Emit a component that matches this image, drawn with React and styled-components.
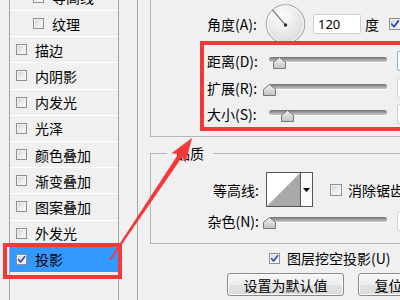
import React from 'react';
import styled, { createGlobalStyle } from 'styled-components';

const Global = createGlobalStyle`
  html, body { margin: 0; padding: 0; background: #f0f0f0; }
  body { font-family: "Noto Sans CJK SC", "Noto Sans", sans-serif; }
`;

const Screen = styled.div`
  position: relative;
  width: 400px;
  height: 300px;
  overflow: hidden;
  display: flex;
  background: #f0f0f0;
  font-family: "Noto Sans CJK SC", "Noto Sans", sans-serif;
  font-size: 14px;
  color: #000;
`;

const Sidebar = styled.div`
  flex: none;
  width: 137px;
  padding-left: 9px;
  box-sizing: border-box;
`;

const StyleList = styled.ul`
  list-style: none;
  margin: -16.2px 0 0;
  padding: 0;
  width: 110px;
  height: 340px;
  box-sizing: border-box;
  border-left: 1px solid #a5a5a5;
  border-right: 1px solid #a5a5a5;
`;

const StyleRow = styled.li`
  height: 26.2px;
  box-sizing: border-box;
  border-top: 1px solid #ffffff;
  display: flex;
  align-items: center;
  gap: 8px;
  padding-left: ${p => (p.$indent ? 23 : 6)}px;
  background: ${p => (p.$selected ? '#3399ff' : 'transparent')};
  line-height: 20px;
  white-space: nowrap;
`;

const Box = styled.span`
  flex: none;
  width: ${p => p.$size}px;
  height: ${p => p.$size}px;
  box-sizing: border-box;
  border: 1px solid #8e8f8f;
  background: linear-gradient(135deg, #d0d0d0 0%, #ececec 55%, #fbfbfb 100%);
  box-shadow: inset 0 0 0 1px #f3f3f3;
  display: inline-flex;
  align-items: center;
  justify-content: center;
`;

const Check = ({ checked, size = 11 }) => (
  <Box $size={size}>
    {checked && (
      <svg width={size - 2} height={size - 2} viewBox="0 0 9 9">
        <path d="M1.6 4.7 L3.6 7 L7.6 1.7" fill="none" stroke="#2b48b5" strokeWidth="1.6" strokeLinecap="round" strokeLinejoin="round" />
      </svg>
    )}
  </Box>
);

const Panel = styled.div`
  flex: none;
  width: 330px;
  border-left: 1px solid #a9a9a9;
  padding-left: 12px;
  box-sizing: border-box;
  display: flex;
  flex-direction: column;
`;

const Group = styled.fieldset`
  margin: ${p => (p.$cut ? '0' : '6px 0 0')};
  padding: 0;
  width: 310px;
  min-width: 0;
  box-sizing: border-box;
  border: 1px solid #b4b4b4;
  border-top: ${p => (p.$cut ? 'none' : '1px solid #b4b4b4')};
`;

const Legend = styled.legend`
  margin-left: 16px;
  padding: 0 9px;
  line-height: 20px;
  font-size: 14px;
`;

const GroupBody = styled.div`
  padding: ${p => p.$pad};
  padding-left: 49px;
  display: flex;
  flex-direction: column;
`;

const FieldRow = styled.div`
  display: flex;
  align-items: center;
  height: ${p => p.$h}px;
`;

const Label = styled.label`
  flex: none;
  width: 63px;
  box-sizing: border-box;
  text-align: ${p => (p.$right ? 'right' : 'left')};
  padding: ${p => (p.$right ? '0 4px 0 0' : '0 0 0 7px')};
  line-height: 20px;
  white-space: nowrap;
`;

const DialWrap = styled.div`
  flex: none;
  margin-left: 2px;
  width: 41px;
  height: 40px;
`;

const NumBox = styled.div`
  flex: none;
  width: 48px;
  height: 20px;
  margin-left: ${p => p.$ml}px;
  box-sizing: border-box;
  background: #fff;
  border: 1px solid ${p => (p.$focus ? '#7fb2e6' : '#cfcfcf')};
  border-radius: 2px;
  padding-left: 4px;
  font-size: 13px;
  line-height: 18px;
  font-family: "Noto Sans", "Noto Sans CJK SC", sans-serif;
`;

const Unit = styled.span`
  margin: 0 10px 0 4px;
  line-height: 20px;
`;

const Slider = styled.div`
  position: relative;
  flex: none;
  width: 130px;
  height: 20px;
`;

const Track = styled.div`
  margin: 6px 6px 0;
  height: 5px;
  border-radius: 3px;
  background: linear-gradient(#6f6f6f, #a9a9a9 60%, #c9c9c9);
  box-shadow: 0 1px 0 #ffffff;
`;

const ThumbSpot = styled.svg`
  position: absolute;
  top: 6px;
  left: ${p => p.$pos - 0.5}px;
`;

const Thumb = ({ pos }) => (
  <ThumbSpot $pos={pos} width="13" height="12" viewBox="0 0 13 12">
    <defs>
      <linearGradient id="tg" x1="0" y1="0" x2="0" y2="1">
        <stop offset="0" stopColor="#f2f2f2" />
        <stop offset="1" stopColor="#c2c2c2" />
      </linearGradient>
    </defs>
    <polygon points="6.5,0.5 12.5,5.2 12.5,11.5 0.5,11.5 0.5,5.2" fill="url(#tg)" stroke="#777" strokeWidth="1" />
  </ThumbSpot>
);

const SliderControl = ({ pos }) => (
  <Slider>
    <Track />
    <Thumb pos={pos} />
  </Slider>
);

const Picker = styled.div`
  flex: none;
  display: flex;
  width: 47px;
  height: 35px;
  margin-left: 3px;
  box-sizing: border-box;
  border: 1px solid #555;
  background: #fff;
`;

const PickerArrow = styled.div`
  flex: 1;
  border-left: 1px solid #555;
  display: flex;
  align-items: center;
  justify-content: center;
  background: #fafafa;
`;

const CheckLabel = styled.label`
  display: flex;
  align-items: center;
  gap: ${p => p.$gap}px;
  margin-left: ${p => p.$ml}px;
  line-height: 20px;
  white-space: nowrap;
`;

const OptionRow = styled.div`
  display: flex;
  align-items: center;
  height: 28px;
  padding-left: 119px;
`;

const ButtonRow = styled.div`
  display: flex;
  gap: 14px;
  margin-top: 1px;
  padding-left: 77px;
`;

const Button = styled.button`
  flex: none;
  width: ${p => p.$w}px;
  height: 23px;
  padding: 0;
  font: inherit;
  font-size: 14px;
  line-height: 20px;
  color: #000;
  border: 1px solid #8a8a8a;
  border-radius: 3px;
  background: linear-gradient(#f6f6f6 0%, #eeeeee 50%, #e2e2e2 52%, #dadada 100%);
  box-shadow: inset 0 0 0 1px #fbfbfb;
`;

const Mark = styled.div`
  position: absolute;
  left: ${p => p.$x}px;
  top: ${p => p.$y}px;
  width: ${p => p.$w}px;
  height: ${p => p.$h}px;
  box-sizing: border-box;
  border: 4px solid #f03a3a;
  pointer-events: none;
`;

const ArrowLayer = styled.svg`
  position: absolute;
  left: 0;
  top: 0;
  pointer-events: none;
`;

const styleItems = [
  { name: '等高线', indent: true },
  { name: '纹理', indent: true },
  { name: '描边' },
  { name: '内阴影' },
  { name: '内发光' },
  { name: '光泽' },
  { name: '颜色叠加' },
  { name: '渐变叠加' },
  { name: '图案叠加' },
  { name: '外发光' },
  { name: '投影', checked: true, selected: true },
];

const sliders = [
  { label: '距离(D):', pos: 10.5, focus: true },
  { label: '扩展(R):', pos: 0.5 },
  { label: '大小(S):', pos: 18 },
];

export default function App() {
  return (
    <>
      <Global />
      <Screen>
        <Sidebar>
          <StyleList>
            {styleItems.map(it => (
              <StyleRow key={it.name} $indent={it.indent} $selected={it.selected}>
                <Check checked={it.checked} />
                <span>{it.name}</span>
              </StyleRow>
            ))}
          </StyleList>
        </Sidebar>

        <Panel>
          <Group $cut>
            <GroupBody $pad="0 0 8.5px">
              <FieldRow $h={48}>
                <Label>角度(A):</Label>
                <DialWrap>
                  <svg width="41" height="40" viewBox="0 0 41 40">
                    <defs>
                      <radialGradient id="dg" cx="0.4" cy="0.3" r="0.8">
                        <stop offset="0" stopColor="#ffffff" />
                        <stop offset="1" stopColor="#d6d6d6" />
                      </radialGradient>
                    </defs>
                    <circle cx="20.5" cy="20" r="19.3" fill="url(#dg)" stroke="#9c9c9c" />
                    <circle cx="20.5" cy="20" r="18.2" fill="none" stroke="#ffffff" strokeOpacity="0.7" />
                    <line x1="20.5" y1="21" x2="7.5" y2="6" stroke="#555" strokeWidth="1.1" />
                    <circle cx="20.5" cy="21" r="1.8" fill="#333" />
                  </svg>
                </DialWrap>
                <NumBox $ml={7}>120</NumBox>
                <Unit>度</Unit>
                <Check checked size={12} />
              </FieldRow>
              {sliders.map(s => (
                <FieldRow key={s.label} $h={26.5}>
                  <Label>{s.label}</Label>
                  <SliderControl pos={s.pos} />
                  <NumBox $ml={4} $focus={s.focus} />
                </FieldRow>
              ))}
            </GroupBody>
          </Group>

          <Group>
            <Legend>品质</Legend>
            <GroupBody $pad="9px 0 8px">
              <FieldRow $h={35}>
                <Label $right>等高线:</Label>
                <Picker>
                  <svg width="33" height="33" viewBox="0 0 33 33">
                    <polygon points="0,33 33,0 33,33" fill="#a9a9a9" />
                  </svg>
                  <PickerArrow>
                    <svg width="7" height="4" viewBox="0 0 7 4">
                      <polygon points="0,0 7,0 3.5,4" fill="#000" />
                    </svg>
                  </PickerArrow>
                </Picker>
                <CheckLabel $gap={6} $ml={17}>
                  <Check size={12} />
                  <span>消除锯齿(L)</span>
                </CheckLabel>
              </FieldRow>
              <FieldRow $h={28}>
                <Label $right>杂色(N):</Label>
                <SliderControl pos={0.5} />
                <NumBox $ml={4} />
              </FieldRow>
            </GroupBody>
          </Group>

          <OptionRow>
            <CheckLabel $gap={7} $ml={0}>
              <Check checked />
              <span>图层挖空投影(U)</span>
            </CheckLabel>
          </OptionRow>
          <ButtonRow>
            <Button $w={117}>设置为默认值</Button>
            <Button $w={117}>复位为默认值</Button>
          </ButtonRow>
        </Panel>

        <Mark $x={3} $y={243} $w={119} $h={36} />
        <Mark $x={200} $y={41} $w={230} $h={90} />
        <ArrowLayer width="400" height="300" viewBox="0 0 400 300">
          <polygon
            points="192,138 185.7,162.6 182.3,156.8 110.8,260.5 109.3,259.5 178.3,154.1 171.5,153.2"
            fill="#f23a3a"
          />
        </ArrowLayer>
      </Screen>
    </>
  );
}
